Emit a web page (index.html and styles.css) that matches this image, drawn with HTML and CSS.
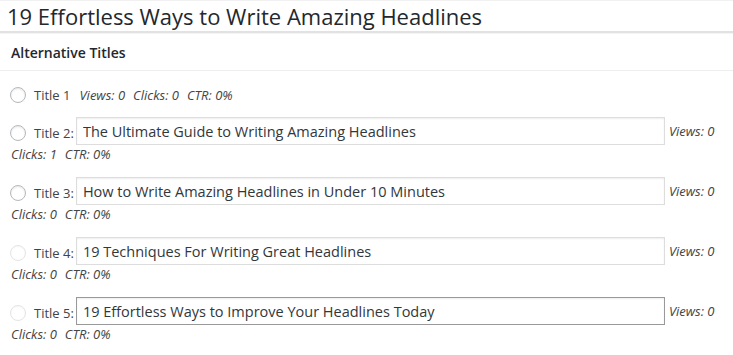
FILE: index.html
```html
<!DOCTYPE html>
<html>
<head>
<meta charset="utf-8">
<link rel="stylesheet" href="styles.css">
</head>
<body>
<div class="headline">19 Effortless Ways to Write Amazing Headlines</div>
<div class="box">
  <h2 class="box-title">Alternative Titles</h2>
  <div class="rows">
    <div class="row row-first">
      <div class="line">
        <span class="radio"></span>
        <span class="label">Title 1</span>
        <span class="stat first">Views: 0</span>
        <span class="stat">Clicks: 0</span>
        <span class="stat">CTR: 0%</span>
      </div>
    </div>
    <div class="row">
      <div class="line">
        <span class="radio"></span>
        <span class="label">Title 2:</span>
        <input class="field" type="text" value="The Ultimate Guide to Writing Amazing Headlines">
        <span class="stat views">Views: 0</span>
      </div>
      <div class="stats"><span class="stat">Clicks: 1</span><span class="stat">CTR: 0%</span></div>
    </div>
    <div class="row">
      <div class="line">
        <span class="radio"></span>
        <span class="label">Title 3:</span>
        <input class="field" type="text" value="How to Write Amazing Headlines in Under 10 Minutes">
        <span class="stat views">Views: 0</span>
      </div>
      <div class="stats"><span class="stat">Clicks: 0</span><span class="stat">CTR: 0%</span></div>
    </div>
    <div class="row">
      <div class="line">
        <span class="radio faint"></span>
        <span class="label">Title 4:</span>
        <input class="field" type="text" value="19 Techniques For Writing Great Headlines">
        <span class="stat views">Views: 0</span>
      </div>
      <div class="stats"><span class="stat">Clicks: 0</span><span class="stat">CTR: 0%</span></div>
    </div>
    <div class="row">
      <div class="line">
        <span class="radio faint"></span>
        <span class="label">Title 5:</span>
        <input class="field active" type="text" value="19 Effortless Ways to Improve Your Headlines Today">
        <span class="stat views">Views: 0</span>
      </div>
      <div class="stats"><span class="stat">Clicks: 0</span><span class="stat">CTR: 0%</span></div>
    </div>
  </div>
</div>
</body>
</html>
```
FILE: styles.css
```css
html, body {
  margin: 0;
  padding: 0;
  background: #fff;
}
body {
  font-family: "Open Sans", "Liberation Sans", sans-serif;
  color: #444;
  font-size: 13px;
}
.headline {
  height: 33px;
  box-sizing: border-box;
  border-top: 1px solid #f1f1f1;
  border-bottom: 2px solid #e2e2e2;
  padding: 0 0 0 7px;
  font-size: 22px;
  line-height: 30px;
  color: #23282d;
  white-space: nowrap;
}
.box {
  border-top: 1px solid #f4f4f4;
}
.box-title {
  margin: 0;
  height: 37px;
  box-sizing: border-box;
  padding: 2px 11px 0;
  font-size: 14px;
  font-weight: 600;
  line-height: 34px;
  color: #23282d;
  border-bottom: 1px solid #eee;
}
.rows {
  padding: 12px 10px 0 10px;
}
.row {
  margin-bottom: 14px;
}
.row-first {
  margin-bottom: 10px;
}
.line {
  display: flex;
  align-items: center;
  height: 28px;
}
.row-first .line {
  height: 24px;
}
.radio {
  width: 14px;
  height: 14px;
  border: 1px solid #b4b9be;
  border-radius: 50%;
  box-shadow: inset 0 1px 2px rgba(0,0,0,0.1);
  flex: none;
  margin: 3px 8px 0 0;
}
.row-first .radio {
  margin-top: 0;
}
.radio.faint {
  border-color: #e4e4e4;
  box-shadow: inset 0 1px 2px rgba(0,0,0,0.03);
}
.label {
  font-size: 13px;
  margin-top: 4px;
  margin-right: 2px;
  white-space: nowrap;
}
.row-first .label {
  margin-top: 0;
  margin-right: 0;
}
.field {
  width: 589px;
  height: 28px;
  box-sizing: border-box;
  margin: 0;
  border: 1px solid #ddd;
  box-shadow: inset 0 1px 2px rgba(0,0,0,0.07);
  padding: 0 6px;
  font-family: "Open Sans", "Liberation Sans", sans-serif;
  font-size: 14.5px;
  color: #32373c;
  background: #fff;
  outline: none;
  flex: none;
}
.field.active {
  border-color: #999;
}
.stat {
  font-size: 13px;
  font-style: italic;
  color: #444;
  white-space: nowrap;
  margin-right: 8px;
}
.stat.first {
  margin-left: 9px;
}
.stat.views {
  margin-left: 4px;
  margin-right: 0;
}
.stats {
  height: 18px;
  line-height: 18px;
  padding-left: 1px;
}
```
